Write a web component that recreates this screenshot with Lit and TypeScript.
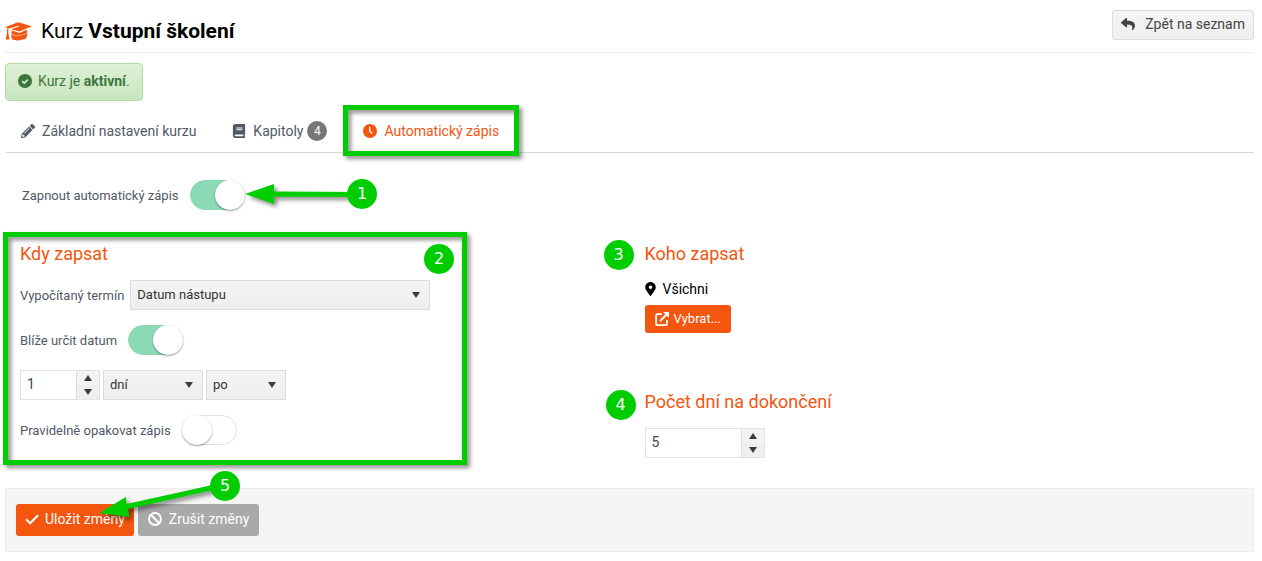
import { LitElement, html, css, svg, nothing } from "lit";
import { customElement, property } from "lit/decorators.js";

const icons: Record<string, { box: string; body: unknown }> = {
  cap: {
    box: "0 0 27 20",
    body: svg`<path fill="currentColor" d="M0 6.200L13 1.200 27 5.200 14.500 10.600 6 8.200 14 5.600 13.600 4.800 3.800 7.400z"/>
      <path fill="currentColor" d="M7 9.600L14.500 11.900 21.800 8.800C22.800 11.500 22.400 15 21 17.600 17 19.600 10.500 20 7.200 18.600 5.800 16 6 12.200 7 9.600z"/>
      <path fill="none" stroke="#fff" stroke-width=".5" d="M6 13.200C11 15.600 17.500 14.800 22.600 11.800"/>
      <path fill="currentColor" d="M2 7.400L3.400 7.800 3.300 12.200 4.600 18.600H.6L2 12.200z"/>`,
  },
  reply: {
    box: "0 0 512 512",
    body: svg`<path fill="currentColor" d="M8.309 189.836L184.313 37.851C199.719 24.546 224 35.347 224 56.015v80.053c160.629 1.839 288 34.032 288 186.258 0 61.441-39.581 122.309-83.333 154.132-13.653 9.931-33.111-2.533-28.077-18.631 45.344-145.012-21.507-183.510-176.590-185.742V360c0 20.700-24.300 31.453-39.687 18.164l-176.004-152c-11.071-9.562-11.086-26.753 0-36.328z"/>`,
  },
  ok: {
    box: "0 0 16 16",
    body: svg`<circle cx="8" cy="8" r="8" fill="currentColor"/><path d="M4.800 8.200l2.300 2.200 4.200-4" fill="none" stroke="#dcefd6" stroke-width="1.800"/>`,
  },
  pencil: {
    box: "0 0 512 512",
    body: svg`<path fill="currentColor" d="M497.900 142.100l-46.100 46.100c-4.700 4.700-12.300 4.700-17 0l-111-111c-4.700-4.700-4.700-12.300 0-17l46.100-46.100c18.700-18.700 49.100-18.700 67.900 0l60.100 60.100c18.800 18.700 18.800 49.100 0 67.900zM284.200 99.800L21.600 362.400.4 483.900c-2.900 16.400 11.400 30.600 27.800 27.800l121.500-21.300 262.600-262.600c4.700-4.700 4.700-12.300 0-17l-111-111c-4.800-4.700-12.400-4.700-17.100 0zM124.100 339.900c-5.500-5.500-5.500-14.300 0-19.800l154-154c5.500-5.500 14.300-5.500 19.800 0s5.500 14.300 0 19.800l-154 154c-5.500 5.500-14.300 5.500-19.800 0zM88 424h48v36.300l-64.500 11.300-31.100-31.100L51.700 376H88v48z"/>`,
  },
  book: {
    box: "0 0 448 512",
    body: svg`<path fill="currentColor" d="M448 360V24c0-13.300-10.700-24-24-24H96C43 0 0 43 0 96v320c0 53 43 96 96 96h328c13.300 0 24-10.700 24-24v-16c0-7.500-3.500-14.300-8.900-18.700-4.200-15.400-4.200-59.300 0-74.700 5.400-4.300 8.900-11.100 8.900-18.600zM128 134c0-3.300 2.700-6 6-6h212c3.300 0 6 2.700 6 6v20c0 3.300-2.700 6-6 6H134c-3.300 0-6-2.700-6-6v-20zm0 64c0-3.300 2.700-6 6-6h212c3.300 0 6 2.700 6 6v20c0 3.300-2.700 6-6 6H134c-3.300 0-6-2.700-6-6v-20zm253.400 250H96c-17.700 0-32-14.300-32-32 0-17.600 14.400-32 32-32h285.400c-1.900 17.100-1.900 46.900 0 64z"/>`,
  },
  clock: {
    box: "0 0 16 16",
    body: svg`<circle cx="8" cy="8" r="8" fill="currentColor"/><path d="M7.600 3v5.200l3 2.600" fill="none" stroke="#fff" stroke-width="1.600"/>`,
  },
  pin: {
    box: "0 0 384 512",
    body: svg`<path fill="currentColor" d="M172.268 501.670C26.970 291.031 0 269.413 0 192 0 85.961 85.961 0 192 0s192 85.961 192 192c0 77.413-26.970 99.031-172.268 309.670-9.535 13.774-29.930 13.773-39.464 0zM192 256c35 0 64-29 64-64s-29-64-64-64-64 29-64 64 29 64 64 64z"/>`,
  },
  open: {
    box: "0 0 16 16",
    body: svg`<path d="M8 2.500H3.200C2.100 2.500 1.200 3.200 1.200 4.300v8.700c0 1.100.8 1.900 1.900 1.900h8.700c1.100 0 1.900-.8 1.900-1.900V9" fill="none" stroke="currentColor" stroke-width="2"/>
      <path d="M5.800 10.300L13 3.200" stroke="currentColor" stroke-width="2.300"/><path d="M9.200 0H16V6.800z" fill="currentColor"/>`,
  },
  check: {
    box: "0 0 16 16",
    body: svg`<path fill="none" stroke="currentColor" stroke-width="2.400" d="M1.200 8.400l4.600 4.400L15 3.600"/>`,
  },
  ban: {
    box: "0 0 16 16",
    body: svg`<circle cx="8" cy="8" r="6.800" fill="none" stroke="currentColor" stroke-width="2.200"/><path d="M3.200 3.200l9.600 9.600" stroke="currentColor" stroke-width="2.200"/>`,
  },
  up: { box: "0 0 8 6", body: svg`<path fill="#3c3c3c" d="M0 6L4 0l4 6z"/>` },
  down: { box: "0 0 8 6", body: svg`<path fill="#3c3c3c" d="M0 0h8L4 6z"/>` },
};

const icon = (name: string, cls = "") =>
  html`<svg class="icon ${cls}" viewBox=${icons[name].box} aria-hidden="true">${icons[name].body}</svg>`;

const base = css`
  *, *::before, *::after { box-sizing: border-box; }
  .icon { display: block; flex: none; width: 14px; height: 14px; }
  input, select, button { font-family: inherit; margin: 0; }
`;

@customElement("number-field")
class NumberField extends LitElement {
  @property({ type: Number }) value = 0;
  @property() label = "";

  static styles = [base, css`
    :host { display: inline-flex; }
    .field { display: flex; width: 100%; height: 30px; border: 1px solid #e2e2e2; background: #fff; }
    .value {
      flex: 1; min-width: 0; border: 0; padding: 0 6px 2px; outline: none; background: none;
      font-size: 14px; color: #444; appearance: textfield;
    }
    .value::-webkit-inner-spin-button { appearance: none; }
    .steps {
      display: flex; flex-direction: column; flex: none; width: 23px;
      border-left: 1px solid #dedede; background: #f3f3f3;
    }
    .step {
      flex: 1; display: flex; align-items: center; justify-content: center;
      padding: 0; border: 0; background: none;
    }
    .step + .step { background: #efefef; }
    .arrow { width: 8px; height: 6px; }
  `];

  render() {
    return html`<div class="field">
      <input class="value" type="number" aria-label=${this.label} .value=${String(this.value)} />
      <div class="steps">
        <button class="step" type="button" aria-label="+" @click=${() => this.value++}>${icon("up", "arrow")}</button>
        <button class="step" type="button" aria-label="−" @click=${() => this.value--}>${icon("down", "arrow")}</button>
      </div>
    </div>`;
  }
}

@customElement("app-root")
class AppRoot extends LitElement {
  static styles = [base, css`
    :host {
      display: block; padding: 0 8px 8px 5px; background: #fff; color: #000;
      font-family: Roboto, "Liberation Sans", sans-serif; font-size: 14px; line-height: 20px;
    }
    .header {
      display: flex; justify-content: space-between; align-items: flex-start;
      padding: 10px 0 9px; border-bottom: 1px solid #ececec;
    }
    .title {
      display: flex; align-items: center; gap: 9px; margin: 0; padding-top: 9px;
      font-size: 21px; font-weight: 400; line-height: 24px;
    }
    .title b { font-weight: 700; }
    .cap { width: 27px; height: 20px; color: #f4550f; }
    .btn {
      display: inline-flex; align-items: center; gap: 8px; border: 0; border-radius: 3px;
      font-size: 14px; line-height: 20px; color: #fff; white-space: nowrap;
    }
    .back {
      gap: 10px; height: 30px; padding: 0 8px 2px; border: 1px solid #dcdcdc; color: #444;
      background: linear-gradient(#f5f5f5, #efefef);
    }
    .alert {
      display: flex; align-items: center; gap: 6px; width: fit-content; height: 38px; margin-top: 10px;
      padding: 0 12px 2px; border: 1px solid #b2dba1; border-radius: 4px; color: #3c763d;
      background: linear-gradient(#dff0d8, #c8e5bc);
    }
    .tabs { display: flex; gap: 4px; margin-top: 10px; border-bottom: 1px solid #d8d8d8; }
    .tab {
      position: relative; display: flex; align-items: center; gap: 7px; height: 41px; padding: 0 16px 2px;
      color: #515967; text-decoration: none; white-space: nowrap;
    }
    .active { color: #f4550f; }
    .count {
      width: 20px; height: 20px; margin-left: -3px; border-radius: 50%; background: #777; color: #fff;
      font-size: 12px; text-align: center;
    }
    .line { display: flex; align-items: center; gap: 6px; font-size: 13px; color: #515967; white-space: nowrap; }
    .line label { padding-top: 2px; }
    .enable { position: relative; width: fit-content; margin: 27px 0 0 17px; gap: 11px; }
    .switched { gap: 11px; }
    .switch {
      appearance: none; position: relative; width: 55px; height: 30px; border-radius: 15px;
      border: 1px solid #dfdfdf; background: #fff;
    }
    .switch::before {
      content: ""; position: absolute; left: -1px; top: -1px; width: 30px; height: 30px;
      border-radius: 50%; background: #fff; box-shadow: 0 1px 2px rgba(0, 0, 0, 0.4);
    }
    .switch:checked { border-color: #87d7b0; background: #8cdab5; }
    .switch:checked::before { left: auto; right: -1px; }
    .columns { display: grid; grid-template-columns: 1fr 1fr; margin-top: 34px; }
    .column { position: relative; padding: 0 15px; }
    .when { position: relative; display: flex; flex-direction: column; gap: 15px; width: 410px; max-width: 100%; }
    .heading { margin: 0; font-size: 18px; line-height: 20px; font-weight: 400; color: #f4550f; }
    .when .heading { margin-bottom: 1px; }
    .pick { display: grid; flex: none; align-items: center; }
    .pick > * { grid-area: 1 / 1; }
    .select {
      appearance: none; width: 100%; height: 30px; padding: 0 6px 2px; border: 1px solid #dcdcdc; border-radius: 0;
      background: linear-gradient(#f4f4f4, #eee); font-size: 13px; color: #333;
    }
    .arrow { width: 8px; height: 6px; margin-right: 10px; justify-self: end; pointer-events: none; }
    .wide { flex: 1; }
    .unit { width: 100px; }
    .side { width: 80px; }
    .short { width: 80px; }
    .days { width: 120px; margin-top: 16px; }
    .inline { gap: 3px; }
    .who { display: flex; align-items: center; gap: 7px; margin: 15px 0 6px; }
    .pin { width: 11px; }
    .choose { height: 28px; padding: 0 10px; gap: 5px; font-size: 13px; background: #f4550f; }
    .finish { position: relative; margin-top: 59px; }
    .footer {
      position: relative; display: flex; gap: 4px; margin-top: 30px; padding: 15px 10px;
      border: 1px solid #ebebeb; background: #f5f5f5;
    }
    .action { height: 32px; padding: 0 9px 2px; gap: 6px; }
    .save { background: #f4550f; }
    .cancel { gap: 7px; padding: 0 10px 2px; background: #a9a9a9; }

    .frame {
      position: absolute; pointer-events: none; border: 5px solid #00cd00;
      filter: drop-shadow(3px 3px 2px rgba(0, 0, 0, 0.45));
    }
    .frame-tab { inset: -6px -4px -4px -4px; }
    .frame-when { inset: -12px -37px -20px -17px; }
    .mark {
      position: absolute; width: 30px; height: 30px; border-radius: 50%; background: #00cd00; color: #fff;
      font-family: "DejaVu Sans", sans-serif; font-size: 16px; line-height: 30px; text-align: center;
    }
    .mark1 { left: 325px; top: -1px; }
    .mark2 { right: -24px; top: 0; }
    .mark3 { left: -26px; top: -4px; }
    .mark4 { left: -39px; top: -2px; }
    .mark5 { left: 204px; top: -18px; }
    .pointer {
      position: absolute; pointer-events: none; overflow: visible; fill: #00cd00;
      filter: drop-shadow(3px 3px 2px rgba(0, 0, 0, 0.45));
    }
    .pointer1 { left: 223px; top: 3px; width: 110px; height: 22px; }
    .pointer5 { left: 93px; top: -6px; width: 120px; height: 36px; }
  `];

  render() {
    return html`
      <header class="header">
        <h1 class="title">${icon("cap", "cap")}<span>Kurz <b>Vstupní školení</b></span></h1>
        <button class="btn back" type="button">${icon("reply")}Zpět na seznam</button>
      </header>

      <div class="alert" role="status">${icon("ok")}<span>Kurz je <b>aktivní</b>.</span></div>

      <nav class="tabs">
        ${this.tab("pencil", "Základní nastavení kurzu")}
        ${this.tab("book", "Kapitoly", 4)}
        ${this.tab("clock", "Automatický zápis", undefined, true)}
      </nav>

      <div class="line enable">
        <label for="enable">Zapnout automatický zápis</label>
        <input class="switch" id="enable" type="checkbox" role="switch" checked />
        <svg class="pointer pointer1" viewBox="0 0 110 22" aria-hidden="true">
          <path d="M0 11L29 1V8.500L110 9v5l-81-.3V21z" />
        </svg>
        <span class="mark mark1">1</span>
      </div>

      <main class="columns">
        <section class="column">
          <div class="when">
            <h2 class="heading">Kdy zapsat</h2>
            <div class="line">
              <label for="term">Vypočítaný termín</label>
              ${this.pick("term", "Datum nástupu", "wide")}
            </div>
            <div class="line switched">
              <label for="closer">Blíže určit datum</label>
              <input class="switch" id="closer" type="checkbox" role="switch" checked />
            </div>
            <div class="line inline">
              <number-field class="short" value="1" label="Počet"></number-field>
              ${this.pick("unit", "dní", "unit", "Jednotka")}
              ${this.pick("side", "po", "side", "Před nebo po")}
            </div>
            <div class="line switched">
              <label for="repeat">Pravidelně opakovat zápis</label>
              <input class="switch" id="repeat" type="checkbox" role="switch" />
            </div>
            <div class="frame frame-when"></div>
            <span class="mark mark2">2</span>
          </div>
        </section>

        <section class="column">
          <h2 class="heading">Koho zapsat</h2>
          <div class="who">${icon("pin", "pin")}Všichni</div>
          <button class="btn choose" type="button">${icon("open")}Vybrat...</button>
          <span class="mark mark3">3</span>
          <div class="finish">
            <h2 class="heading">Počet dní na dokončení</h2>
            <number-field class="days" value="5" label="Počet dní na dokončení"></number-field>
            <span class="mark mark4">4</span>
          </div>
        </section>
      </main>

      <footer class="footer">
        <button class="btn action save" type="button">${icon("check")}Uložit změny</button>
        <button class="btn action cancel" type="button">${icon("ban")}Zrušit změny</button>
        <svg class="pointer pointer5" viewBox="0 0 120 36" aria-hidden="true">
          <path d="M0 30L27 14l.6 7L118 1l1 5-90 20 1.500 8z" />
        </svg>
        <span class="mark mark5">5</span>
      </footer>
    `;
  }

  private tab(glyph: string, text: string, count?: number, active = false) {
    return html`<a class="tab ${active ? "active" : ""}" href="#" aria-current=${active ? "page" : "false"}>
      ${icon(glyph)}<span>${text}</span>
      ${count ? html`<span class="count">${count}</span>` : nothing}
      ${active ? html`<span class="frame frame-tab"></span>` : nothing}
    </a>`;
  }

  private pick(id: string, text: string, cls: string, label?: string) {
    return html`<span class="pick ${cls}">
      <select class="select" id=${id} aria-label=${label ?? nothing}><option>${text}</option></select>
      ${icon("down", "arrow")}
    </span>`;
  }
}
